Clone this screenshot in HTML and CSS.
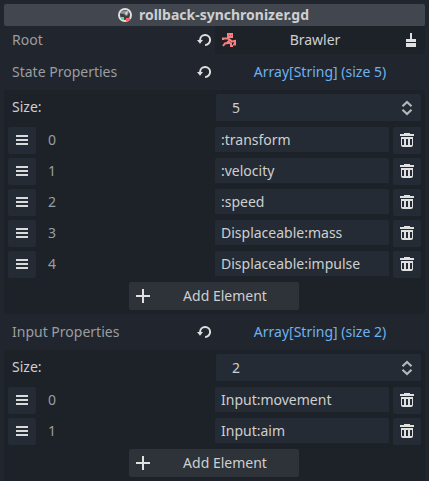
FILE: index.html
```
<!DOCTYPE html>
<html lang="en">
<head>
<meta charset="utf-8">
<title>Inspector</title>
<link rel="stylesheet" href="styles.css">
</head>
<body>
<svg class="defs" width="0" height="0">
  <symbol id="revert" viewBox="0 0 16 16"><path d="M4.1 9V8a5 5 0 1 1 5 5" fill="none" stroke="#e0e0e0" stroke-width="2"/><path d="M1 8h6L4 11.700z" fill="#e0e0e0"/></symbol>
  <symbol id="grip" viewBox="0 0 16 16"><path d="M2 3h12v2H2zM2 7h12v2H2zM2 11h12v2H2z" fill="#d9dbdb"/></symbol>
  <symbol id="trash" viewBox="0 0 16 16"><path d="M5 1h6v1h4v2H1V2h4zM2 5h12v8a2 2 0 0 1-2 2H4a2 2 0 0 1-2-2z" fill="#e0e0e0"/><path d="M3 7h2v6H3zM7 7h2v6H7zM11 7h2v6h-2z" fill="#252b34"/></symbol>
  <symbol id="plus" viewBox="0 0 16 16"><path d="M7 1h2v6h6v2H9v6H7V9H1V7h6z" fill="#e0e0e0"/></symbol>
  <symbol id="spin" viewBox="0 0 16 16"><path d="M3.500 6.200 8 2l4.500 4.200M3.500 9.800 8 14l4.500-4.200" fill="none" stroke="#b5b7b9" stroke-width="2.200"/></symbol>
</svg>
<main class="inspector">
  <header class="title">
    <svg width="16" height="16" viewBox="0 0 16 16"><circle cx="8" cy="8" r="6" fill="#3a3e45" stroke="#e0e0e0" stroke-width="2"/><path d="M4 5 7 3.500l5 .5-1 4-2 1-2-2-3-.5z" fill="#8f9296"/><path d="M8 6 11 4 9.500 8z" fill="#e0e0e0"/><path d="M3 10h4v3H5z" fill="#45e887"/><path d="M9 11h4v2l-3 1.500H9z" fill="#ff5f5f"/></svg>
    <span>rollback-synchronizer.gd</span>
  </header>
  <div class="prop root">
    <span class="name">Root</span>
    <svg class="icon"><use href="#revert"/></svg>
    <div class="node">
      <svg class="icon" viewBox="0 0 16 16"><path d="M6 1h6v5H6z" fill="#fc7f7f"/><path d="M2 8V6.500h5L9 8l-3 3-2 .5L2 14M8 7l3 2.500 3-.5v3.500h-2M6 10l4 1.500V14h2" fill="none" stroke="#fc7f7f" stroke-width="2"/><path d="M8 3h1v1H8zM10 3h1v1h-1z" fill="#a95c60"/></svg>
      <span>Brawler</span>
      <svg class="icon" viewBox="0 0 16 16"><path d="M7 1h2v6h4v3H3V7h4zM3 11h10v4H3z" fill="#e0e0e0"/></svg>
    </div>
  </div>
  <div class="prop">
    <span class="name">State Properties</span>
    <svg class="icon"><use href="#revert"/></svg>
    <span class="value">Array[String] (size 5)</span>
  </div>
  <section class="panel">
    <div class="size"><span>Size:</span><div class="spin"><span>5</span><svg class="icon"><use href="#spin"/></svg></div></div>
    <div class="row"><div class="btn"><svg class="icon"><use href="#grip"/></svg></div><span class="idx">0</span><div class="field">:transform</div><div class="btn"><svg class="icon"><use href="#trash"/></svg></div></div>
    <div class="row"><div class="btn"><svg class="icon"><use href="#grip"/></svg></div><span class="idx">1</span><div class="field">:velocity</div><div class="btn"><svg class="icon"><use href="#trash"/></svg></div></div>
    <div class="row"><div class="btn"><svg class="icon"><use href="#grip"/></svg></div><span class="idx">2</span><div class="field">:speed</div><div class="btn"><svg class="icon"><use href="#trash"/></svg></div></div>
    <div class="row"><div class="btn"><svg class="icon"><use href="#grip"/></svg></div><span class="idx">3</span><div class="field">Displaceable:mass</div><div class="btn"><svg class="icon"><use href="#trash"/></svg></div></div>
    <div class="row"><div class="btn"><svg class="icon"><use href="#grip"/></svg></div><span class="idx">4</span><div class="field">Displaceable:impulse</div><div class="btn"><svg class="icon"><use href="#trash"/></svg></div></div>
    <div class="add"><svg class="icon"><use href="#plus"/></svg><span>Add Element</span></div>
  </section>
  <div class="prop">
    <span class="name">Input Properties</span>
    <svg class="icon"><use href="#revert"/></svg>
    <span class="value">Array[String] (size 2)</span>
  </div>
  <section class="panel">
    <div class="size"><span>Size:</span><div class="spin"><span>2</span><svg class="icon"><use href="#spin"/></svg></div></div>
    <div class="row"><div class="btn"><svg class="icon"><use href="#grip"/></svg></div><span class="idx">0</span><div class="field">Input:movement</div><div class="btn"><svg class="icon"><use href="#trash"/></svg></div></div>
    <div class="row"><div class="btn"><svg class="icon"><use href="#grip"/></svg></div><span class="idx">1</span><div class="field">Input:aim</div><div class="btn"><svg class="icon"><use href="#trash"/></svg></div></div>
    <div class="add"><svg class="icon"><use href="#plus"/></svg><span>Add Element</span></div>
  </section>
</main>
</body>
</html>
```
FILE: styles.css
```
* { box-sizing: border-box; }
body {
  margin: 0;
  background: #21262e;
  color: #cdcfd0;
  font: 14px/20px "Noto Sans", sans-serif;
  overflow: hidden;
}
.defs { display: block; }
.icon { width: 16px; height: 16px; flex: none; display: block; }
.inspector { width: 429px; height: 481px; padding: 4px 4px 0; }
.title {
  height: 22px;
  display: flex;
  align-items: center;
  justify-content: center;
  gap: 6px;
  padding-right: 3px;
  background: #42464e;
  border-radius: 2px;
  font-weight: 700;
}
.prop {
  height: 36px;
  display: grid;
  grid-template-columns: 188px 16px 1fr;
  align-items: center;
  padding-left: 4px;
}
.prop.root { height: 28px; }
.name { padding-left: 4px; color: #9b9da0; }
.value { margin-left: 3px; text-align: center; color: #6cb2f0; }
.node {
  height: 28px;
  margin-left: 3px;
  padding: 0 6px;
  display: flex;
  align-items: center;
  background: #1d2229;
  border-radius: 2px;
}
.node span { flex: 1; text-align: center; padding-right: 10px; }
.panel { background: #1d2229; border-radius: 2px; padding: 4px; }
.size { height: 27px; display: flex; justify-content: space-between; padding-left: 4px; line-height: 26px; margin-bottom: 6px; }
.spin {
  width: 205px;
  display: flex;
  align-items: center;
  justify-content: space-between;
  padding: 0 6px 0 16px;
  background: #252b34;
  border-radius: 2px 2px 0 0;
}
.row {
  height: 27px;
  display: grid;
  grid-template-columns: 28px 179px 174px 28px;
  margin-bottom: 4px;
}
.row .btn:last-child { margin-left: 4px; width: 28px; }
.btn { display: flex; align-items: flex-start; justify-content: center; padding-top: 5px; background: #252b34; border-radius: 2px; }
.idx { padding-left: 12px; line-height: 26px; color: #9b9da0; }
.field { height: 25px; padding-left: 6px; line-height: 25px; background: #252b34; border-radius: 2px 2px 0 0; }
.add {
  width: 170px;
  height: 28px;
  margin: 0 0 0 121px;
  padding: 0 6px;
  display: flex;
  align-items: center;
  background: #2e3239;
  border-radius: 2px;
}
.add span { flex: 1; text-align: center; padding-left: 6px; }
```
